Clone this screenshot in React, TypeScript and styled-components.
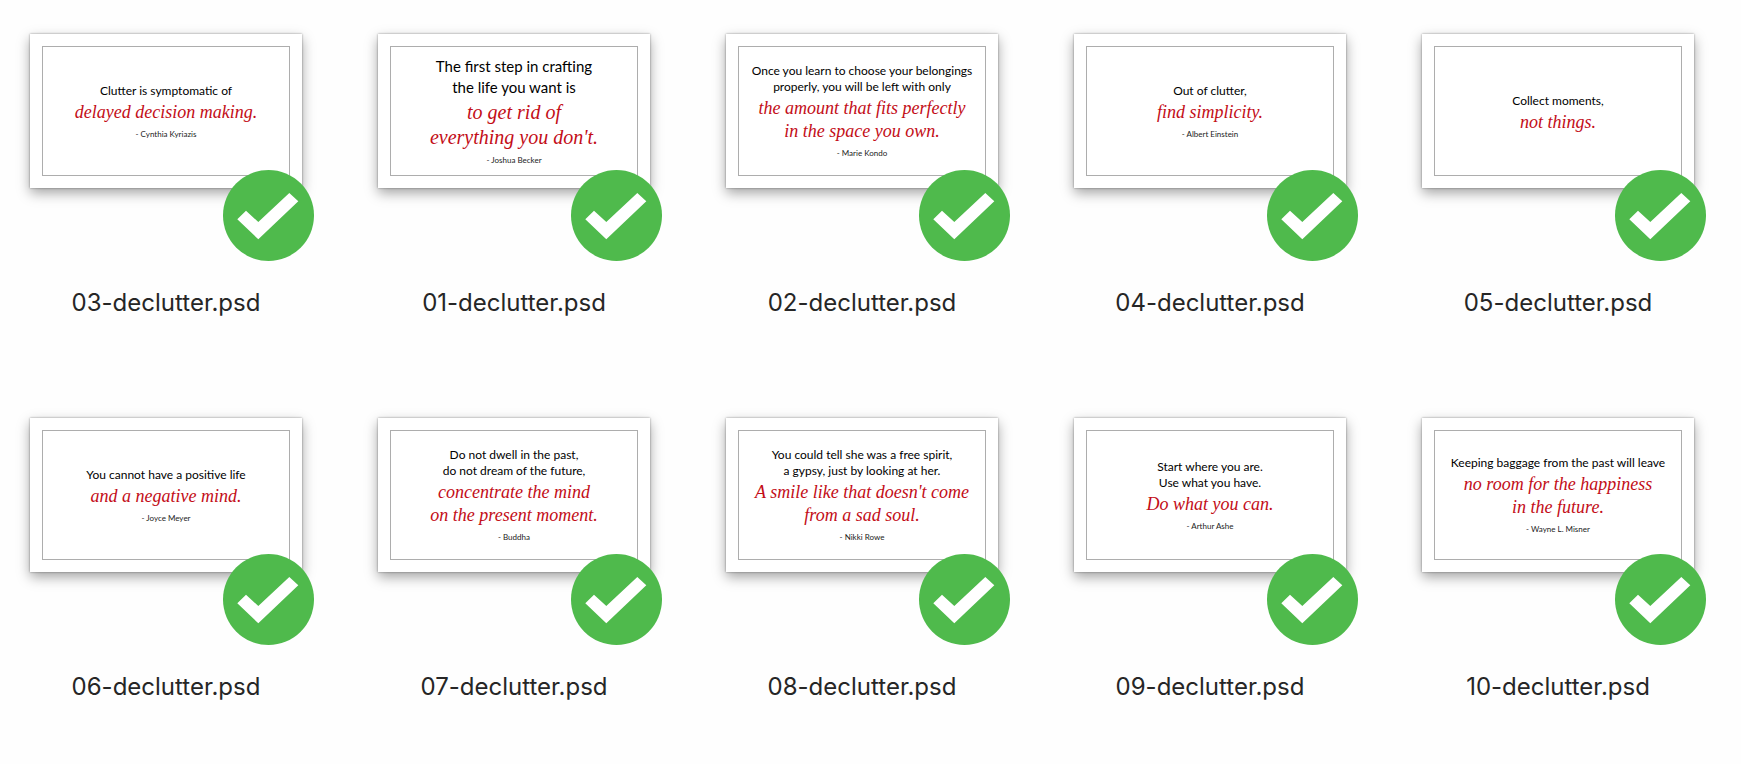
import React from 'react';
import styled, { createGlobalStyle } from 'styled-components';

const GlobalStyle = createGlobalStyle`
  *, *::before, *::after { box-sizing: border-box; }
  body {
    margin: 0;
    background: #fefefe;
    color: #262626;
    font-family: Inter, "Liberation Sans", sans-serif;
  }
`;

const FileGrid = styled.main`
  display: grid;
  grid-template-columns: repeat(auto-fill, 272px);
  justify-content: space-between;
  gap: 100px 64px;
  padding: 34px 47px 66px 30px;
`;

const FileItem = styled.figure`
  display: flex;
  flex-direction: column;
  gap: 99px;
  margin: 0;
`;

const Thumbnail = styled.div`
  position: relative;
  height: 154px;
  padding: 12px;
  background: #fff;
  box-shadow: 0 0 2px rgba(0, 0, 0, 0.4), 0 5px 12px rgba(0, 0, 0, 0.36);
`;

const Frame = styled.blockquote`
  display: flex;
  flex-direction: column;
  justify-content: center;
  height: 100%;
  margin: 0;
  padding-top: 4px;
  border: 1px solid #adadad;
  text-align: center;
  white-space: nowrap;
`;

const Lines = styled.div`
  display: flex;
  flex-direction: column;
`;

const Lead = styled.span<{ $large?: boolean }>`
  color: #000;
  font-family: Lato, "Liberation Sans", sans-serif;
  font-size: ${(p) => (p.$large ? 15 : 12)}px;
  line-height: ${(p) => (p.$large ? 21 : 16)}px;
`;

const AccentLines = styled(Lines)`
  margin-top: 2px;
`;

const Accent = styled.span<{ $large?: boolean }>`
  color: #c30d17;
  font-family: "Liberation Serif", serif;
  font-style: italic;
  font-size: ${(p) => (p.$large ? 20 : 18)}px;
  line-height: ${(p) => (p.$large ? 25 : 23)}px;
`;

const Author = styled.cite`
  color: #222;
  font-family: Lato, "Liberation Sans", sans-serif;
  font-size: 8px;
  font-style: normal;
  line-height: 20px;
`;

const Badge = styled.svg`
  position: absolute;
  right: -12px;
  bottom: -73px;
  width: 91px;
  height: 91px;
`;

const FileName = styled.figcaption`
  font-size: 24px;
  line-height: 31px;
  text-align: center;
`;

interface QuoteFile {
  name: string;
  lead: string[];
  accent: string[];
  author?: string;
  large?: boolean;
}

const files: QuoteFile[] = [
  { name: '03-declutter.psd', lead: ['Clutter is symptomatic of'], accent: ['delayed decision making.'], author: 'Cynthia Kyriazis' },
  { name: '01-declutter.psd', lead: ['The first step in crafting', 'the life you want is'], accent: ['to get rid of', "everything you don't."], author: 'Joshua Becker', large: true },
  { name: '02-declutter.psd', lead: ['Once you learn to choose your belongings', 'properly, you will be left with only'], accent: ['the amount that fits perfectly', 'in the space you own.'], author: 'Marie Kondo' },
  { name: '04-declutter.psd', lead: ['Out of clutter,'], accent: ['find simplicity.'], author: 'Albert Einstein' },
  { name: '05-declutter.psd', lead: ['Collect moments,'], accent: ['not things.'] },
  { name: '06-declutter.psd', lead: ['You cannot have a positive life'], accent: ['and a negative mind.'], author: 'Joyce Meyer' },
  { name: '07-declutter.psd', lead: ['Do not dwell in the past,', 'do not dream of the future,'], accent: ['concentrate the mind', 'on the present moment.'], author: 'Buddha' },
  { name: '08-declutter.psd', lead: ['You could tell she was a free spirit,', 'a gypsy, just by looking at her.'], accent: ["A smile like that doesn't come", 'from a sad soul.'], author: 'Nikki Rowe' },
  { name: '09-declutter.psd', lead: ['Start where you are.', 'Use what you have.'], accent: ['Do what you can.'], author: 'Arthur Ashe' },
  { name: '10-declutter.psd', lead: ['Keeping baggage from the past will leave'], accent: ['no room for the happiness', 'in the future.'], author: 'Wayne L. Misner' },
];

function SyncedBadge() {
  return (
    <Badge viewBox="0 0 91 91" aria-hidden="true">
      <circle cx="45.5" cy="45.5" r="45.5" fill="#4fba4c" />
      <path d="M23 40.7 35.3 52 66.3 23 75.3 31.3 35.3 69.3 14.3 49.3Z" fill="#fff" />
    </Badge>
  );
}

export default function App() {
  return (
    <>
      <GlobalStyle />
      <FileGrid>
        {files.map(({ name, lead, accent, author, large }) => (
          <FileItem key={name}>
            <Thumbnail>
              <Frame>
                <Lines>
                  {lead.map((line) => <Lead key={line} $large={large}>{line}</Lead>)}
                </Lines>
                <AccentLines>
                  {accent.map((line) => <Accent key={line} $large={large}>{line}</Accent>)}
                </AccentLines>
                {author && <Author>- {author}</Author>}
              </Frame>
              <SyncedBadge />
            </Thumbnail>
            <FileName>{name}</FileName>
          </FileItem>
        ))}
      </FileGrid>
    </>
  );
}
